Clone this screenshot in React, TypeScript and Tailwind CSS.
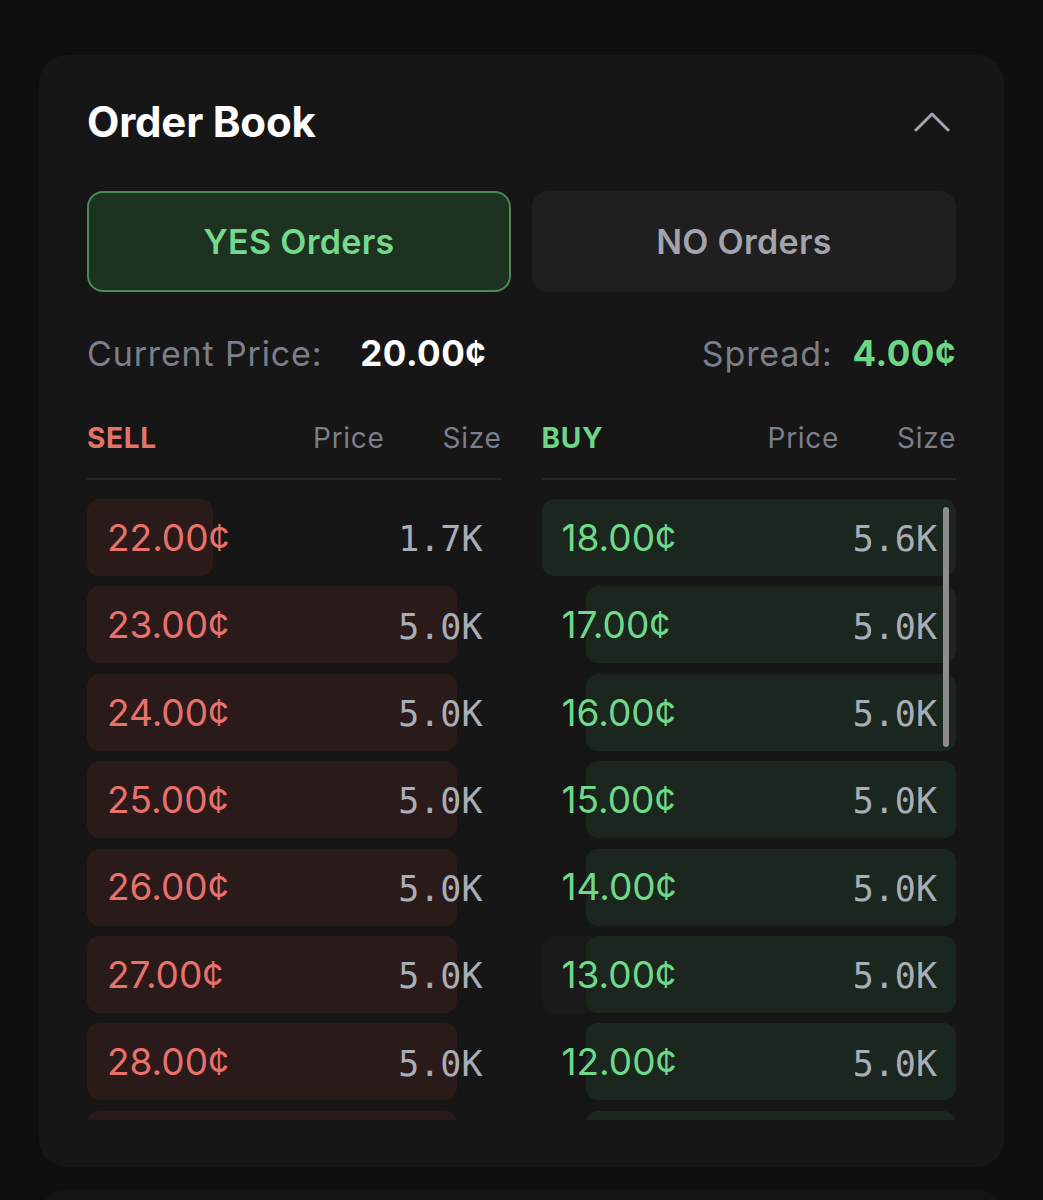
import React from 'react';

type Level = { price: string; size: number };

const sells: Level[] = [
  { price: '22.00', size: 1.7 },
  { price: '23.00', size: 5.0 },
  { price: '24.00', size: 5.0 },
  { price: '25.00', size: 5.0 },
  { price: '26.00', size: 5.0 },
  { price: '27.00', size: 5.0 },
  { price: '28.00', size: 5.0 },
  { price: '29.00', size: 5.0 },
  { price: '30.00', size: 5.0 },
];

const buys: Level[] = [
  { price: '18.00', size: 5.6 },
  { price: '17.00', size: 5.0 },
  { price: '16.00', size: 5.0 },
  { price: '15.00', size: 5.0 },
  { price: '14.00', size: 5.0 },
  { price: '13.00', size: 5.0 },
  { price: '12.00', size: 5.0 },
  { price: '11.00', size: 5.0 },
  { price: '10.00', size: 5.0 },
];

const maxSize = Math.max(...sells.map((l) => l.size), ...buys.map((l) => l.size));

const sans = "font-['Inter','Noto_Sans',sans-serif]";
const mono = "font-['DejaVu_Sans_Mono','Liberation_Mono',monospace]";

const ChevronUp = () => (
  <svg width="36" height="22" viewBox="0 0 36 22" fill="none">
    <polyline
      points="2,19 18,3 34,19"
      stroke="#a3a3ad"
      strokeWidth="3"
      strokeLinecap="round"
      strokeLinejoin="round"
    />
  </svg>
);

const BookSide: React.FC<{ side: 'sell' | 'buy'; levels: Level[] }> = ({ side, levels }) => {
  const isSell = side === 'sell';
  return (
    <div className="flex flex-col">
      {/* column header */}
      <div className="flex items-start h-[71px] pt-[8px] border-b-2 border-[#262626]">
        <span
          className={`flex-1 text-[28px] font-bold tracking-wide ${isSell ? 'text-[#e5736c]' : 'text-[#6cd685]'}`}
        >
          {isSell ? 'SELL' : 'BUY'}
        </span>
        <span className="text-[28px] text-[#7b7f8a] tracking-wide">Price</span>
        <span className="ml-[58px] text-[28px] text-[#7b7f8a] tracking-wide">Size</span>
      </div>

      {/* depth rows */}
      <div className="relative mt-[19px] h-[621px] overflow-hidden">
        <div className="flex flex-col gap-[10.4px]">
          {levels.map((l) => {
            const hovered = !isSell && l.price === '13.00';
            return (
              <div
                key={l.price}
                className={`relative h-[77px] rounded-[12px] overflow-hidden ${hovered ? 'bg-[#191a19]' : ''}`}
              >
                <div
                  className={`absolute inset-y-0 rounded-[12px] ${isSell ? 'left-0 bg-[#2a1a1a]' : 'right-0 bg-[#1b271e]'}`}
                  style={{ width: `${(l.size / maxSize) * 100}%` }}
                />
                <div className="relative flex h-full items-center justify-between pl-[20px] pr-[19px]">
                  <span className={`text-[37px] ${isSell ? 'text-[#e8716b]' : 'text-[#6fd98a]'}`}>
                    {l.price}¢
                  </span>
                  <span className={`${mono} text-[35px] text-[#a9adb6] pt-[4px]`}>
                    {l.size.toFixed(1)}K
                  </span>
                </div>
              </div>
            );
          })}
        </div>
        {!isSell && (
          <div className="absolute right-[7px] top-[8px] h-[240px] w-[6px] rounded-full bg-[#8c8d8c]" />
        )}
      </div>
    </div>
  );
};

export default function App() {
  return (
    <div className={`${sans} min-h-[1200px] bg-[#0f0f0f] px-[39px] pt-[55px]`}>
      <div className="rounded-[28px] bg-[#161616] px-[48px] pt-[48px] pb-[47px]">
        {/* header */}
        <div className="flex items-center justify-between h-[40px] mt-[-2px]">
          <h2 className="text-[42px] font-bold text-white tracking-[-0.2px]">Order Book</h2>
          <div className="mr-[6px] mt-[2px]">
            <ChevronUp />
          </div>
        </div>

        {/* YES / NO tabs */}
        <div className="mt-[50px] grid grid-cols-2 gap-[21px]">
          <button className="h-[101px] rounded-[16px] border-2 border-[#4b8a57] bg-[#1e3222] text-[34px] font-semibold text-[#74d98c] tracking-[0.3px]">
            YES Orders
          </button>
          <button className="h-[101px] rounded-[16px] bg-[#1f1f1f] text-[34px] font-semibold text-[#a3a3ab] tracking-[0.3px]">
            NO Orders
          </button>
        </div>

        {/* price summary */}
        <div className="mt-[40px] flex items-center h-[42px]">
          <span className="text-[34px] text-[#7b7f8a] tracking-wide">Current Price:</span>
          <span className="ml-[38px] text-[35px] font-bold text-white tracking-[0.5px]">20.00¢</span>
          <span className="ml-auto text-[34px] text-[#7b7f8a] tracking-wide">Spread:</span>
          <span className="ml-[20px] text-[35px] font-bold text-[#6cd685] tracking-[0.5px]">4.00¢</span>
        </div>

        {/* order book */}
        <div className="mt-[35px] grid grid-cols-2 gap-[40px]">
          <BookSide side="sell" levels={sells} />
          <BookSide side="buy" levels={buys} />
        </div>
      </div>
      <div className="mt-[22px] h-[40px] rounded-t-[28px] bg-[#141414]" />
    </div>
  );
}
